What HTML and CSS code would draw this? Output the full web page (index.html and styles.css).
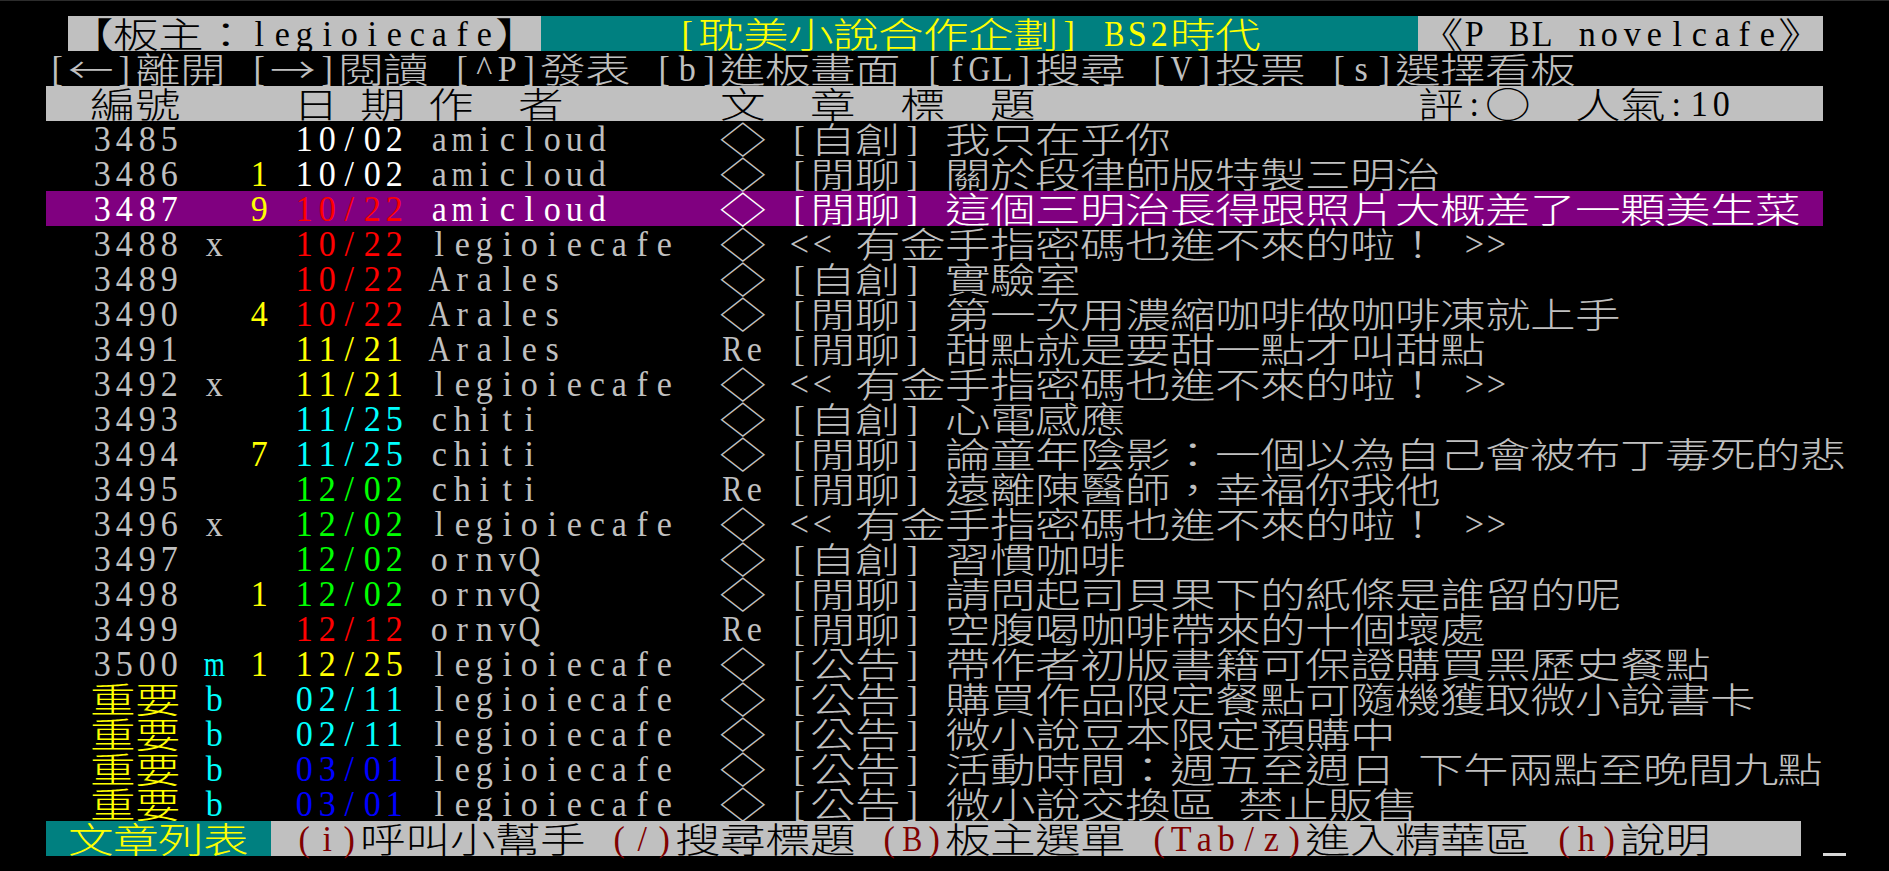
FILE: index.html
```html
<!DOCTYPE html>
<html lang="zh-Hant">
<head>
<meta charset="utf-8">
<title>BS2 文章列表</title>
<link rel="stylesheet" href="styles.css">
</head>
<body>
<main class="screen">
<div class="row"> <span class="seg bg-gray fk w21">【板主：legioiecafe】</span><span class="seg bg-teal fy w39">      [耽美小說合作企劃] BS2時代</span><span class="seg bg-gray fk w18">《P BL novelcafe》</span></div>
<div class="row">[←]離開 [→]閱讀 [^P]發表 [b]進板畫面 [fGL]搜尋 [V]投票 [s]選擇看板</div>
<div class="row bar bg-gray fk">  編號     日 期 作  者       文  章  標  題                 評:○  人氣:10</div>
<div class="row">  3485     <span class="fw">10/02</span> amicloud     ◇ [自創] 我只在乎你</div>
<div class="row">  3486   <span class="fy">1</span> <span class="fw">10/02</span> amicloud     ◇ [閒聊] 關於段律師版特製三明治</div>
<div class="row bar bg-purple fw">  3487   <span class="fy">9</span> <span class="fr">10/22</span> amicloud     ◇ [閒聊] 這個三明治長得跟照片大概差了一顆美生菜</div>
<div class="row">  3488 x   <span class="fr">10/22</span> legioiecafe  ◇ &lt;&lt; 有金手指密碼也進不來的啦！ &gt;&gt;</div>
<div class="row">  3489     <span class="fr">10/22</span> Arales       ◇ [自創] 實驗室</div>
<div class="row">  3490   <span class="fy">4</span> <span class="fr">10/22</span> Arales       ◇ [閒聊] 第一次用濃縮咖啡做咖啡凍就上手</div>
<div class="row">  3491     <span class="fy">11/21</span> Arales       Re [閒聊] 甜點就是要甜一點才叫甜點</div>
<div class="row">  3492 x   <span class="fy">11/21</span> legioiecafe  ◇ &lt;&lt; 有金手指密碼也進不來的啦！ &gt;&gt;</div>
<div class="row">  3493     <span class="fc">11/25</span> chiti        ◇ [自創] 心電感應</div>
<div class="row">  3494   <span class="fy">7</span> <span class="fc">11/25</span> chiti        ◇ [閒聊] 論童年陰影：一個以為自己會被布丁毒死的悲</div>
<div class="row">  3495     <span class="fg">12/02</span> chiti        Re [閒聊] 遠離陳醫師，幸福你我他</div>
<div class="row">  3496 x   <span class="fg">12/02</span> legioiecafe  ◇ &lt;&lt; 有金手指密碼也進不來的啦！ &gt;&gt;</div>
<div class="row">  3497     <span class="fg">12/02</span> ornvQ        ◇ [自創] 習慣咖啡</div>
<div class="row">  3498   <span class="fy">1</span> <span class="fg">12/02</span> ornvQ        ◇ [閒聊] 請問起司貝果下的紙條是誰留的呢</div>
<div class="row">  3499     <span class="fr">12/12</span> ornvQ        Re [閒聊] 空腹喝咖啡帶來的十個壞處</div>
<div class="row">  3500 <span class="fc">m</span> <span class="fy">1</span> <span class="fy">12/25</span> legioiecafe  ◇ [公告] 帶作者初版書籍可保證購買黑歷史餐點</div>
<div class="row">  <span class="fy">重要</span> <span class="fc">b</span>   <span class="fc">02/11</span> legioiecafe  ◇ [公告] 購買作品限定餐點可隨機獲取微小說書卡</div>
<div class="row">  <span class="fy">重要</span> <span class="fc">b</span>   <span class="fc">02/11</span> legioiecafe  ◇ [公告] 微小說豆本限定預購中</div>
<div class="row">  <span class="fy">重要</span> <span class="fc">b</span>   <span class="fb">03/01</span> legioiecafe  ◇ [公告] 活動時間：週五至週日 下午兩點至晚間九點</div>
<div class="row">  <span class="fy">重要</span> <span class="fc">b</span>   <span class="fb">03/01</span> legioiecafe  ◇ [公告] 微小說交換區 禁止販售</div>
<div class="row"><span class="seg bg-teal fy w10"> 文章列表 </span><span class="seg bg-gray fk w68"> <span class="fdr">(i)</span>呼叫小幫手 <span class="fdr">(/)</span>搜尋標題 <span class="fdr">(B)</span>板主選單 <span class="fdr">(Tab/z)</span>進入精華區 <span class="fdr">(h)</span>說明</span> <span class="cursor"></span></div>
</main>
<script src="script.js"></script>
</body>
</html>
```

FILE: styles.css
```css
:root {
  --cw: 22.5px;
  --rh: 35px;
  --fx: 1.9;
  --fy: 1.48;
  --hy: 1.16;
}

html, body {
  margin: 0;
  padding: 0;
  background: #000;
}

body {
  border-top: 1px solid #2c2c2c;
  height: 870px;
  overflow: hidden;
}

.screen {
  display: block;
  padding: 15px 0 0 45.7px;
}

.row {
  height: var(--rh);
  line-height: var(--rh);
  white-space: pre;
  font-family: "Liberation Serif", "Noto Sans CJK TC", serif;
  font-size: 31px;
  color: #c0c0c0;
}

.bar {
  width: calc(79 * var(--cw));
}

.seg {
  display: inline-block;
  vertical-align: top;
  height: var(--rh);
}

.w10 { width: calc(10 * var(--cw)); }
.w18 { width: calc(18 * var(--cw)); }
.w21 { width: calc(21 * var(--cw)); }
.w39 { width: calc(39 * var(--cw)); }
.w68 { width: calc(68 * var(--cw)); }

/* character cells */
.h,
.f,
.sp {
  display: inline-flex;
  justify-content: center;
  vertical-align: top;
  height: var(--rh);
}

/* blank cell */
.sp {
  width: var(--cw);
}

/* single-width cell */
.h {
  width: var(--cw);
  transform: scale(1.1, var(--hy));
}

.h.sq1 { transform: scale(0.88, var(--hy)); }
.h.sq2 { transform: scale(0.97, var(--hy)); }

/* double-width cell: small glyph in a narrow box, stretched to two columns */
.f {
  width: calc(2 * var(--cw) / var(--fx));
  margin: 0 calc((2 * var(--cw) - 2 * var(--cw) / var(--fx)) / 2);
  font-family: "Noto Sans CJK TC", "Noto Sans CJK SC", sans-serif;
  font-size: 24px;
  font-weight: 300;
  transform: translateY(-1.5px) scale(var(--fx), var(--fy));
}

.cursor {
  display: inline-block;
  vertical-align: top;
  width: var(--cw);
  height: var(--rh);
  box-shadow: inset 0 -3px 0 #d8d8d8;
}

/* backgrounds */
.bg-gray { background: #c0c0c0; }
.bg-teal { background: #008080; }
.bg-purple { background: #800080; }

/* foregrounds */
.fk { color: #000; }
.fw { color: #fff; }
.fy { color: #ff0; }
.fr { color: #f00; }
.fc { color: #0ff; }
.fg { color: #0f0; }
.fb { color: #00f; }
.fdr { color: #800000; }
```

FILE: script.js
```js
(function () {
  var SQ1 = "mwMW";
  var SQ2 = "ABCDGHKNOQRUVXY";
  var rows = document.querySelectorAll(".row");
  rows.forEach(function (row) {
    var walker = document.createTreeWalker(row, NodeFilter.SHOW_TEXT);
    var nodes = [];
    while (walker.nextNode()) nodes.push(walker.currentNode);
    nodes.forEach(function (node) {
      var frag = document.createDocumentFragment();
      Array.from(node.nodeValue).forEach(function (ch) {
        if (ch === "\n" || ch === "\r") return;
        var cell = document.createElement("span");
        if (ch === " ") {
          cell.className = "sp";
          frag.appendChild(cell);
          return;
        }
        var wide = ch.codePointAt(0) > 0x7f;
        var cls = wide ? "f" : "h";
        if (!wide && SQ1.indexOf(ch) >= 0) cls += " sq1";
        if (!wide && SQ2.indexOf(ch) >= 0) cls += " sq2";
        cell.className = cls;
        cell.textContent = ch;
        frag.appendChild(cell);
      });
      node.parentNode.replaceChild(frag, node);
    });
  });
})();
```
